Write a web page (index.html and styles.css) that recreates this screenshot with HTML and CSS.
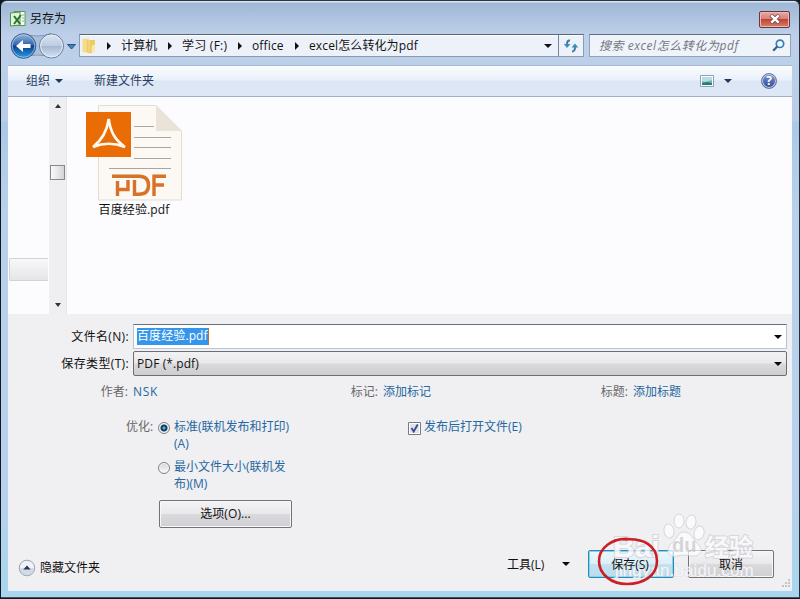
FILE: index.html
```html
<!DOCTYPE html>
<html lang="zh-CN">
<head>
<meta charset="utf-8">
<title>另存为</title>
<link rel="stylesheet" href="styles.css">
</head>
<body>
<div class="window">
  <header class="titlebar">
    <svg class="app-icon" width="16" height="16" viewBox="0 0 16 16"><path d="M4 .5h11v14H4z" fill="#f6fbf4" stroke="#569a50"/><path d="M.5 2 10 1v13L.5 15z" fill="#e3f3dc" stroke="#4d9547"/><path d="M12 4h2M12 7h2M12 10h2" stroke="#7cb874"/><path d="m4 5 6 8M11 4l-7 9" stroke="#26752c" stroke-width="2"/></svg>
    <span class="title">另存为</span>
    <button class="close" aria-label="关闭"><svg width="12" height="10" viewBox="0 0 12 10"><path d="m2 1 8 8M10 1 2 9" stroke="#70424a" stroke-width="4"/><path d="m2.3 1.3 7.4 7.4M9.700 1.300 2.300 8.700" stroke="#fff" stroke-width="2.5"/></svg></button>
  </header>

  <nav class="address-row">
    <svg class="nav-buttons" width="68" height="28" viewBox="0 0 68 28">
      <defs>
        <linearGradient id="back" x2="0" y2="1"><stop stop-color="#9ab9dd"/><stop offset=".45" stop-color="#2f67ad"/><stop offset=".5" stop-color="#0c3e90"/><stop offset="1" stop-color="#29a0e8"/></linearGradient>
        <linearGradient id="forward" x2="0" y2="1"><stop stop-color="#dce6f2"/><stop offset=".48" stop-color="#bdcce0"/><stop offset=".52" stop-color="#a5b9d3"/><stop offset="1" stop-color="#d7e5f4"/></linearGradient>
      </defs>
      <path d="M13 1.500q14 5 28 0v24q-14-5-28 0z" fill="#aabfdb" stroke="#8399b8"/>
      <circle cx="13.500" cy="14" r="12.300" fill="url(#back)" stroke="#415f8c"/>
      <circle cx="13.500" cy="14" r="11.200" fill="none" stroke="#a9c6e5" stroke-width=".8"/>
      <path d="m6 14 7-6v4h7.500v4H13v4z" fill="#fff"/>
      <circle cx="41.500" cy="14" r="12" fill="url(#forward)" stroke="#687f9f"/>
      <circle cx="41.500" cy="14" r="10.900" fill="none" stroke="#e6eef7"/>
      <path d="M57.500 12.500h8L61.500 17z" fill="#3f85bd" stroke="#24547f"/>
    </svg>
    <div class="address">
      <svg class="folder" width="15" height="16" viewBox="0 0 15 16"><path d="M.5 1 7 .5V15l-6.500-1z" fill="#f4dc87"/><path d="M5 2h8v11L8 15.500 5 14z" fill="#eccb66"/><path d="M7 1v13M10 8l3-1v6l-3 1z" fill="#f8e7a4" stroke="#fff0b5" stroke-width=".6"/></svg>
      <i class="crumb-arrow a1"></i><span class="crumb c1">计算机</span>
      <i class="crumb-arrow"></i><span class="crumb c2">学习 (F:)</span>
      <i class="crumb-arrow"></i><span class="crumb c3">office</span>
      <i class="crumb-arrow"></i><span class="crumb c4">excel怎么转化为pdf</span>
      <i class="down address-down"></i>
      <span class="refresh"><svg width="16" height="14" viewBox="0 0 16 14"><path d="M7 1.500Q3.800 1 4 6M9 12.500q3.300 0 3-5.500" fill="none" stroke="#3c79a3" stroke-width="2"/><path d="M.8 5h6.700L4 9zM8.500 8.500h6.800L12 4.500z" fill="#3c8fb4"/></svg></span>
    </div>
    <div class="search"><span>搜索 excel怎么转化为pdf</span>
      <svg width="13" height="13" viewBox="0 0 13 13"><circle cx="8" cy="4.800" r="3.700" fill="#eef8ff" stroke="#397bb0" stroke-width="1.700"/><path d="M5.200 7.600 1.200 11.800" stroke="#315f95" stroke-width="2.200"/></svg>
    </div>
  </nav>

  <main class="client">
    <div class="toolbar">
      <span>组织</span><i class="down organize-down"></i><span class="new-folder">新建文件夹</span>
      <svg class="view" width="14" height="12" viewBox="0 0 14 12"><path d="M.5.5h13v11H.5z" fill="#fff" stroke="#8ba3b3"/><path d="M2 2h10v8H2z" fill="#73b7bc"/><path d="M2 2h10v3L5 7 2 6z" fill="#b6dde7"/><path d="m2 8 5-1 5 1v2H2z" fill="#287c79"/></svg>
      <i class="down view-down"></i><b class="help">?</b>
    </div>

    <section class="browser">
      <div class="tree"><div class="tree-selected"></div></div>
      <div class="scrollbar"><i class="up"></i><i class="thumb"></i><i class="down scroll-down"></i></div>
      <div class="files">
        <figure class="file">
          <svg width="98" height="98" viewBox="0 0 98 98">
            <path d="M13.500 2.500H71L96.500 28v69h-83z" fill="#fcf9f4" stroke="#e3ddd4"/>
            <path d="M71 2.500 96.500 28H71z" fill="#e9e3da"/>
            <path d="M49 23.500h20M49 34.500h37M49 44.500h37M49 55.500h37M24 65.500h62" stroke="#aaa59e"/>
            <path d="M1 9h45v45H1z" fill="#e96c05"/>
            <path d="M23.700 16C22 29 17 37 8 44q15.500-6.500 32 0C30 37 25.500 29 23.700 16z" fill="none" stroke="#fffaf0" stroke-width="2.600"/>
            <path d="M27 73.200h25M32.500 78v15M33 86.500h11.500M43 77v11M52 73.200h2q9.500 0 9.500 9t-9.500 9h-4.500V77M69 93V73.200h12M69 82h10" fill="none" stroke="#d87228" stroke-width="3.400"/>
          </svg>
          <figcaption>百度经验.pdf</figcaption>
        </figure>
      </div>
    </section>

    <section class="form">
      <div class="field name-field"><label>文件名(N):</label><div class="input"><span class="selection">百度经验.pdf</span><i class="down black"></i></div></div>
      <div class="field type-field"><label>保存类型(T):</label><div class="input select"><span>PDF (*.pdf)</span><i class="down black"></i></div></div>
      <div class="metadata"><div><label>作者:</label><a class="author">NSK</a></div><div><label>标记:</label><a>添加标记</a></div><div><label>标题:</label><a>添加标题</a></div></div>
      <div class="options">
        <label class="optimize">优化:</label>
        <div class="radios">
          <div class="choice"><i class="radio checked"></i><span>标准(联机发布和打印)<br>(A)</span></div>
          <div class="choice"><i class="radio"></i><span>最小文件大小(联机发<br>布)(M)</span></div>
          <button class="button option-button">选项(O)...</button>
        </div>
        <div class="publish"><svg width="13" height="13" viewBox="0 0 13 13"><path d="M.5.5h12v12H.5z" fill="#fff" stroke="#777a86"/><path d="M2 2h9v9H2z" fill="#dfe2e9"/><path d="m3.500 6 2.200 3.500L9.700 2.500" fill="none" stroke="#354b8c" stroke-width="1.800"/></svg><span>发布后打开文件(E)</span></div>
      </div>
      <footer class="footer">
        <div class="folder-toggle">
          <svg width="18" height="18" viewBox="0 0 18 18"><circle cx="9" cy="9" r="7.800" fill="#d3dae8" stroke="#a2a8b7"/><path d="M2 9a7 7 0 0 1 14 0z" fill="#f1f3f8"/><path d="M5.300 10.500 9 6.500l3.700 4z" fill="#29394f"/></svg>
          <span>隐藏文件夹</span>
        </div>
        <span class="tools">工具(L)</span><i class="down black tools-down"></i>
        <button class="button save"><span>保存(S)</span></button><button class="button cancel"><span>取消</span></button>
      </footer>
    </section>
  </main>
  <svg class="grip" width="10" height="10" viewBox="0 0 10 10"><path d="M7 1h2v2H7zM4 4h2v2H4zM7 4h2v2H7zM1 7h2v2H1zM4 7h2v2H4zM7 7h2v2H7z" fill="#c4c4cc"/></svg>
  <div class="watermark">
    <span class="brand">Bai</span>
    <svg class="paw" width="44" height="46" viewBox="0 0 44 46"><g fill="#fff" fill-opacity=".8" stroke="#d3d3d9"><ellipse cx="7" cy="18" rx="5" ry="7" transform="rotate(-10 7 18)"/><ellipse cx="17" cy="8" rx="5" ry="7"/><ellipse cx="29" cy="9" rx="5" ry="7" transform="rotate(10 29 9)"/><ellipse cx="37" cy="20" rx="5" ry="7" transform="rotate(15 37 20)"/><path d="M22 19c-6 0-7 7-12 11-8 7-3 15 5 13q7-2 15 0c8 1 12-6 6-12-5-4-7-12-14-12z"/></g></svg>
    <span class="du">du</span><span class="experience">经验</span><span class="site">jingyan.baidu.com</span>
  </div>
  <svg class="annotation" width="64" height="52" viewBox="0 0 64 52"><path d="M31 3C15 2 2 12 2 25s12 23 28 23 30-8 30-23S47 2 28 3.500" fill="none" stroke="#c91f25" stroke-width="2.600"/></svg>
</div>
</body>
</html>
```
FILE: styles.css
```css
* { box-sizing: border-box; }
body { margin: 0; background: #10191f; font: 12px/17px "Open Sans", "Noto Sans CJK SC", sans-serif; color: #111; overflow: hidden; }
button { font: inherit; color: inherit; padding: 0; }
svg { display: block; flex: none; }
i { flex: none; }
.window { position: relative; width: 799px; height: 598px; padding: 1px 6px 6px 7px; margin: 0 0 0 1px; border: solid #b9cce4; border-width: 1px 1px 1px 0; border-top-color: #2b343f; border-right-color: #26303b; border-bottom-color: #41555f; border-radius: 6px 6px 0 0; background: linear-gradient(#d8e5f4 0 1px, #9fb8d6 2px, #bed0e9 34px, #b9cde8 120px, #a9c9e8 121px, #b9d1ea 210px, #b8d1ec 490px, #a9d6ef); }
.titlebar { height: 30px; display: flex; align-items: center; padding: 3px 1px 0 2px; }
.title { margin-left: 4px; }
.close { margin-left: auto; margin-right: 2px; margin-top: 1px; width: 31px; height: 17px; display: flex; align-items: center; justify-content: center; border: 1px solid #6b3440; border-radius: 2px; background: linear-gradient(#e7aaa2, #d78178 45%, #bf4436 50%, #d78167); box-shadow: inset 0 0 0 1px #eab9b4; }
.address-row { height: 33px; display: flex; padding-top: 2px; }
.nav-buttons { margin-left: 2px; margin-top: -2px; }
.address { margin-left: 1px; width: 505px; height: 23px; display: flex; align-items: center; border: 1px solid #8b9bb0; border-top-color: #586675; background: #edf2fa; box-shadow: inset 0 1px #fff; }
.folder { margin-left: 2px; }
.crumb-arrow { width: 0; border-left: 4px solid #111; border-top: 4px solid transparent; border-bottom: 4px solid transparent; margin: 0 10px 0 9px; }
.a1 { margin-left: 10px; }
.crumb { white-space: nowrap; position: relative; letter-spacing: .15px; }
.c1 { width: 38px; }.c2 { width: 47px; letter-spacing: .25px; }.c3 { width: 34px; }.c4 { width: 111px; letter-spacing: .12px; }
.down { width: 0; border: 4px solid transparent; border-top-color: #1e395b; border-bottom: 0; }
.address-down { margin-left: auto; margin-right: 6px; border-top-color: #111; }
.refresh { width: 25px; align-self: stretch; border-left: 1px solid #73849a; display: flex; align-items: center; justify-content: center; }
.search { margin-left: 5px; width: 202px; height: 23px; border: 1px solid #92a3b8; border-top-color: #5f6f80; background: #eff4fb; display: flex; align-items: center; justify-content: space-between; padding: 0 5px 0 9px; color: #737780; font-style: italic; white-space: nowrap; letter-spacing: .55px; }
.client { width: 784px; height: 526px; background: #f0eff1; border-bottom: 1px solid #e3f1fb; }
.toolbar { height: 32px; display: flex; align-items: center; padding: 0 15px 1px 18px; color: #273e63; border-top: 1px solid #a8bad3; border-bottom: 1px solid #a3b1c5; background: linear-gradient(#fafcff, #eaf1fb 46%, #dce6f4 50%, #dde7f6); }
.organize-down { margin-left: 5px; }
.new-folder { margin-left: 31px; }
.view { margin-left: auto; }
.view-down { margin: 0 29px 0 10px; }
.help { width: 16px; height: 16px; border-radius: 50%; border: 1px solid #6c7a9c; background: linear-gradient(#7d96cc, #2c489a); box-shadow: inset 0 0 0 1px #c4d0e8; color: #fff; font-size: 12px; line-height: 14px; text-align: center; }
.browser { height: 217px; display: flex; background: #fcfbfd; }
.tree { width: 41px; padding: 161px 1px 0 1px; }
.tree-selected { height: 23px; border: 1px solid #d3d2d5; border-right: 0; border-radius: 2px 0 0 2px; background: linear-gradient(#f8f8f9, #e6e5e8); }
.scrollbar { width: 18px; border-right: 1px solid #e4e6ea; background: #efeef1; display: flex; flex-direction: column; align-items: center; }
.up { width: 0; margin-top: 7px; border: 3px solid transparent; border-bottom: 4px solid #333; border-top: 0; }
.thumb { margin-top: 57px; width: 15px; height: 15px; border: 1px solid #87888d; background: linear-gradient(90deg, #fafafa, #d4d3d8); }
.scroll-down { margin-top: auto; margin-bottom: 7px; border-width: 4px 3px 0; border-top-color: #333; }
.files { flex: 1; padding: 6px 0 0 18px; }
.file { margin: 0; width: 98px; text-align: center; }
.file figcaption { line-height: 17px; letter-spacing: .12px; }
.form { height: 276px; padding-top: 9px; background: #f0eff1; }
.field { display: flex; align-items: center; height: 27px; padding-right: 5px; }
.field > label { width: 125px; padding-right: 4px; text-align: right; white-space: nowrap; letter-spacing: .35px; }
.input { flex: 1; height: 25px; display: flex; align-items: center; justify-content: space-between; padding: 0 4px 0 3px; background: #fff; border: 1px solid #b3c5d6; border-top-color: #626f7d; }
.selection { color: #fff; background: #3595e9; border-right: 1px solid #b77335; height: 17px; line-height: 16px; letter-spacing: .1px; }
.select { border: 1px solid #6d6d73; border-radius: 2px; background: linear-gradient(#f2f1f3, #e9e8eb 48%, #dad9dc 52%, #cdccd0); letter-spacing: .1px; }
.black { border-top-color: #080808; }
.metadata { display: flex; height: 28px; padding-top: 6px; }
.metadata > div { width: 250px; display: flex; white-space: nowrap; }
.metadata label { width: 120px; text-align: right; margin-right: 5px; color: #69686c; }
.author { letter-spacing: .7px; }
a, .choice, .publish { color: #2467a2; }
.metadata > div:last-child { width: 284px; }
.options { height: 139px; display: flex; padding-top: 13px; }
.optimize { width: 150px; padding-left: 118px; color: #69686c; white-space: nowrap; }
.radios { width: 250px; }
.choice { display: flex; height: 40px; white-space: nowrap; }
.radio { margin: 4px 4px 0 0; width: 12px; height: 12px; border: 1px solid #818187; border-radius: 50%; background: linear-gradient(#d5d4d8, #fafafa); box-shadow: inset 0 0 0 1px #f8f8f8; }
.checked { background: radial-gradient(circle, #58b0d8 0 1px, #163c60 2px 3px, #dae2e9 4px); }
.button { border: 1px solid #747279; border-radius: 2px; background: linear-gradient(#f4f3f5, #e9e8eb 48%, #dad9dc 52%, #d0cfd3); box-shadow: inset 0 0 0 1px #f8f7f9; }
.button span { position: relative; z-index: 2; }
.option-button { display: block; margin: 2px 0 0 1px; width: 133px; height: 28px; padding-bottom: 1px; letter-spacing: .1px; }
.publish { display: flex; height: 17px; white-space: nowrap; }
.publish svg { margin-top: 4px; }
.publish span { margin-left: 3px; }
.footer { display: flex; align-items: center; height: 44px; padding: 0 18px 0 10px; margin-top: -2px; }
.folder-toggle { display: flex; gap: 4px; width: 84px; white-space: nowrap; padding-top: 8px; }
.tools { margin-left: 405px; width: 39px; white-space: nowrap; }
.tools-down { margin-left: 16px; margin-right: 18px; }
.save { width: 86px; height: 28px; border-color: #3086b5; box-shadow: inset 0 0 0 1px #80d5f3; background: linear-gradient(#edf7fb, #dceff8 48%, #c3e1f0 52%, #b9ddee); }
.save span { right: 1px; }
.cancel { width: 86px; height: 28px; margin-left: 14px; }
.grip { position: absolute; right: 8px; bottom: 9px; }
.watermark { position: absolute; z-index: 1; left: 612px; top: 512px; width: 145px; height: 67px; color: #fafafc; opacity: .85; white-space: nowrap; pointer-events: none; }
.brand, .experience { paint-order: stroke fill; -webkit-text-stroke: 2px #d2d2d8; }
.brand { position: absolute; left: 0; top: 19px; font: bold 30px/30px "Liberation Sans", sans-serif; }
.paw { position: absolute; left: 49px; top: 0; }
.du { position: absolute; left: 59px; top: 22px; font: bold 20px/20px "Liberation Sans", sans-serif; color: #d0d0d6; }
.experience { position: absolute; left: 92px; top: 19px; font: bold 24px/28px "Noto Sans CJK SC", sans-serif; }
.site { position: absolute; left: 2px; top: 48px; font: 17px/20px "Liberation Sans", sans-serif; letter-spacing: .1px; paint-order: stroke fill; -webkit-text-stroke: 1px #dadade; }
.annotation { position: absolute; z-index: 2; left: 596px; top: 535px; }
```
